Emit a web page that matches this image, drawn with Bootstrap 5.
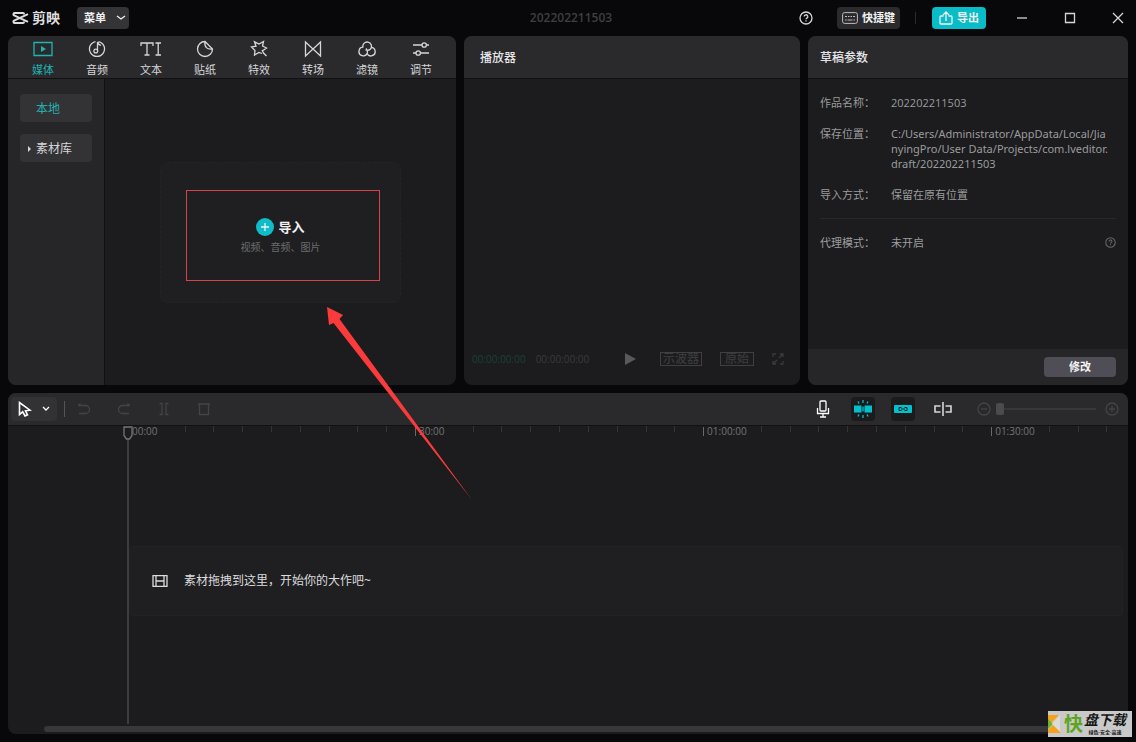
<!DOCTYPE html>
<html lang="zh-CN" data-bs-theme="dark">
<head>
<meta charset="utf-8">
<meta name="viewport" content="width=device-width, initial-scale=1">
<title>剪映</title>
<link href="https://cdn.jsdelivr.net/npm/bootstrap@5.3.0/dist/css/bootstrap.min.css" rel="stylesheet">
<style>
:root{--teal:#00c1cd;--head:#2a2a2d;--pane:#1c1c1e;--side:#262629;--chip:#343437;--line:#111113}
body{background:#08080a;color:#d6d6d8;font:12px/16px "Open Sans","Noto Sans CJK SC",sans-serif}
svg{fill:none;stroke:currentColor;stroke-width:1.3;display:block;flex:none}
button{font:inherit;color:inherit;border:0;background:none;padding:0}
.titlebar{display:grid;grid-template-columns:1fr auto 1fr;height:36px;padding:0 6px 0 12px}
.brand{font-size:14px;font-weight:700;gap:3px;color:#dededf}
.doc-title{color:#3f3f43;font-weight:600}
.chip-btn{background:var(--chip);border-radius:4px;height:22px;font-weight:700;font-size:11px;color:#f0f0f0}
.menu-btn{width:52px;margin-left:17px;gap:10px;padding-left:4px}
.keys-btn{width:63px;background:#2b2b2e;margin:0 15px 0 24px}
.export-btn{width:54px;background:#08bcc8;margin:0 24px 0 16px}
.vline{width:1px;height:12px;background:#2b2b2e}
.vline-tall{height:16px;background:#555558}
.win-btn{width:24px;height:24px}
.win-group{gap:24px}
.workspace{display:grid;grid-template-columns:28fr 21fr 20fr;gap:8px;flex:349 1 0;min-height:300px}
.pane{background:var(--pane);border-radius:8px;min-width:0}
.pane-head{background:var(--head);height:43px;border-bottom:1px solid var(--line);border-radius:8px 8px 0 0}
.pane-title{font-size:12px;line-height:16px;padding:2px 16px 0;margin:0;font-weight:500;color:#e6e6e8}
.pane-title-near{padding-left:12px}
.tool-tab{width:54px;font-size:11px;line-height:14px;gap:5px;padding-top:4px}
.tool-tab.on{color:#1fb3b3}
.side{width:97px;background:var(--side);border-right:1px solid var(--line);border-radius:0 0 0 8px;padding:15px 12px;gap:12px}
.side-btn{background:#333336;border-radius:4px;height:28px;text-align:left;padding:2px 0 0 8px;gap:5px}
.side-btn.on{color:#25aeb0;padding-left:16px}
.drop{width:241px;height:141px;background:#1f1f21;border:1px dashed #242427;border-radius:8px;gap:4px;padding-top:8px}
.import-btn{font-size:13px;font-weight:700;color:#f2f2f2;line-height:18px;gap:4px}
.drop-note{font-size:10px;line-height:14px;color:#6c6c6f}
.marker{left:25px;top:27px;width:194px;height:91px;border:1px solid #d8434b}
.pointer-arrow{left:164px;top:142px;z-index:5;pointer-events:none}
.player-bar{height:24px;padding:0 16px 0 8px;margin-bottom:14px;font-size:10px;color:#3a3a3d}
.time-now{color:#164238;margin-right:10px}
.box-btn{border:1px solid #3f3f41;line-height:12px;height:14px;color:#3f3f41;font-size:12px;padding:0 2px;margin-right:18px}
.box-btn-wide{padding:0 4px}
.facts{display:grid;grid-template-columns:71px 1fr;row-gap:16px;font-size:11px;line-height:15px;margin:0;padding:16px 12px;color:#9b9b9d}
.facts dt{font-weight:400}.facts dd{margin:0}
.facts .file-path{font-family:"Noto Sans","Noto Sans CJK SC",sans-serif;white-space:nowrap}
.facts hr{grid-column:1/-1;margin:0;border-color:#4a4a4d}
.hint{color:#6a6a6d}
.pane-foot{height:36px;background:var(--side);border-radius:0 0 8px 8px;padding:0 12px}
.edit-btn{width:72px;height:20px;border-radius:4px;background:#4f4e57;color:#f4f4f4;font-size:11px;font-weight:700}
.timeline{flex:341 1 0;min-height:260px;margin-top:8px}
.tl-tools{height:33px;background:var(--head);border-bottom:1px solid var(--line);border-radius:8px 8px 0 0;padding:0 4px 0 3px}
.tool{width:24px;height:24px;border-radius:4px;display:flex;align-items:center;justify-content:center}
.tool-slim{width:16px}
.dim{color:#444447}
.tool.on{background:#1b1b1e;color:var(--teal)}
.select-tool{width:46px;height:24px;background:#323235;border-radius:4px;color:#fff;gap:10px;margin-right:7px}
.edit-tools{gap:16px;margin-left:7px}
.view-tools{gap:16px}
.zoom-tools{gap:4px;padding-left:5px}
.zoom-range{appearance:none;-webkit-appearance:none;width:100px;height:16px;background:none;margin:0}
.zoom-range::-webkit-slider-runnable-track{height:2px;background:#38383b}
.zoom-range::-webkit-slider-thumb{-webkit-appearance:none;width:8px;height:12px;border-radius:2px;background:#4b4b4e;margin-top:-5px}
.ruler{margin-left:119px;height:10px;display:grid;grid-template-columns:8fr repeat(8,4fr) 8fr repeat(8,4fr) 8fr repeat(8,4fr) 8fr 4fr 4fr 3fr;font-size:10px;line-height:10px;color:#737376}
.ruler i{border-left:1px solid #343437;height:6px}
.ruler span{padding-left:4px;position:relative;white-space:nowrap}
.ruler span::before{content:"";position:absolute;left:0;top:1px;height:9px;border-left:1px solid #6a6a6d}
.ruler .at-start{padding-left:5px}
.ruler .at-start::before{display:none}
.playhead{left:114px;top:0;bottom:10px;width:12px;color:#757578}
.playhead::after{content:"";flex:1;width:2px;background:#3d3d40}
.track{margin:0 5px 0 121px;height:70px;background:#1f1f21;border:1px solid #222224;border-radius:4px;padding-left:22px;gap:16px;color:#dcdcde}
.scroller{margin:0 8px 2px 36px;height:6px;border-radius:3px;background:#38383a}
.stamp{right:4px;bottom:5px;width:84px;height:26px;background:#c9c9c9;color:#151515;z-index:6}
.stamp svg{stroke:none}
.stamp-lead{color:#5ea321;font-size:19px;line-height:24px;font-weight:700;margin:0 1px 0 3px}
.stamp-main{font-size:14px;line-height:16px;font-weight:700;font-style:italic}
.stamp-sub{font-size:5px;line-height:8px;font-weight:700}
</style>
</head>
<body class="d-flex flex-column min-vh-100 position-relative">
<header class="titlebar align-items-center">
  <div class="d-flex align-items-center">
    <div class="brand d-flex align-items-center">
      <svg width="17" height="14" viewBox="0 0 17 14"><g stroke-width="2"><path d="M1.500 4V3q0-1 1-1H11q1 0 1 1v.5M1.500 10v1q0 1 1 1H11q1 0 1-1v-.5"/><path d="M1 3.800 16 10.800M1 10.200 16 3.200"/></g></svg>
      <span>剪映</span>
    </div>
    <button class="chip-btn menu-btn d-flex align-items-center justify-content-center">菜单
      <svg width="10" height="6" viewBox="0 0 10 6"><path d="m1 1 4 3 4-3"/></svg></button>
  </div>
  <div class="doc-title">202202211503</div>
  <div class="d-flex align-items-center justify-content-end">
    <button aria-label="帮助"><svg width="14" height="14" viewBox="0 0 14 14"><circle cx="7" cy="7" r="6"/><path d="M5.200 5.600a1.800 1.800 0 1 1 2.700 1.500q-.9.5-.9 1.100M7 9.300v1.200"/></svg></button>
    <button class="chip-btn keys-btn d-flex align-items-center justify-content-center gap-1">
      <svg width="16" height="12" viewBox="0 0 16 12"><g stroke-width="1" stroke="#bdbdbf"><rect x=".6" y=".6" width="14.800" height="10.800" rx="2"/><path d="M3 4.500h2m1 0h1.500m1 0H10m1 0h2M3 8h1.500m1 0h5m1 0H13"/></g></svg>快捷键</button>
    <span class="vline"></span>
    <button class="chip-btn export-btn d-flex align-items-center justify-content-center gap-1">
      <svg width="14" height="14" viewBox="0 0 14 14"><path d="M4.500 5H2q-1 0-1 1v6q0 1 1 1h10q1 0 1-1V6q0-1-1-1H9.500M7 10V1.500M4 4l3-3 3 3"/></svg>导出</button>
    <div class="win-group d-flex">
      <button class="win-btn d-flex align-items-center justify-content-center" aria-label="最小化"><svg width="12" height="12" viewBox="0 0 12 12"><path d="M1 6h10"/></svg></button>
      <button class="win-btn d-flex align-items-center justify-content-center" aria-label="最大化"><svg width="12" height="12" viewBox="0 0 12 12"><path d="M1.500 1.500h9v9h-9z"/></svg></button>
      <button class="win-btn d-flex align-items-center justify-content-center" aria-label="关闭"><svg width="12" height="12" viewBox="0 0 12 12"><path d="m1 1 10 10M11 1 1 11"/></svg></button>
    </div>
  </div>
</header>

<div class="d-flex flex-column flex-fill px-2 pb-2">
<main class="workspace">
  <section class="pane d-flex flex-column">
    <nav class="pane-head d-flex px-2">
      <button class="tool-tab on d-flex flex-column align-items-center"><svg width="20" height="18" viewBox="0 0 20 18"><path d="M1 2.500h18v13H1z"/><path d="m8 6 5 3-5 3z" fill="currentColor" stroke="none"/></svg>媒体</button>
      <button class="tool-tab d-flex flex-column align-items-center"><svg width="18" height="18" viewBox="0 0 18 18"><path d="M7.500 1.600a7.500 7.500 0 1 0 3 0M9.500 11V2q.5 2.500 3.500 3.500"/><circle cx="7.800" cy="11" r="1.900"/></svg>音频</button>
      <button class="tool-tab d-flex flex-column align-items-center"><svg width="22" height="18" viewBox="0 0 22 18"><path d="M1 6V3h12v3M7 3v12M4.500 15h5M15.500 3H21M18.200 3v12M15.500 15H21"/></svg>文本</button>
      <button class="tool-tab d-flex flex-column align-items-center"><svg width="18" height="18" viewBox="0 0 18 18"><path d="M9 1.500a7.500 7.500 0 1 0 7.500 7.500ZM9 1.500q-1 8.500 7.500 7.500"/></svg>贴纸</button>
      <button class="tool-tab d-flex flex-column align-items-center"><svg width="18" height="18" viewBox="0 0 18 18"><path d="M12 13.500 9 12.500 4.500 15 5 10.500 1.500 7 6 6.200 4.500 1.800 9 4 13.500 1.500 12.500 6 16.500 8 13 10.500M12 10l1.500 3 3 3"/></svg>特效</button>
      <button class="tool-tab d-flex flex-column align-items-center"><svg width="18" height="18" viewBox="0 0 18 18"><path d="M1.500 2v14L9 9zM16.500 2v14L9 9z"/></svg>转场</button>
      <button class="tool-tab d-flex flex-column align-items-center"><svg width="18" height="18" viewBox="0 0 18 18"><path d="M5 7.500a4.300 4.300 0 1 1 7.500 1.500Q10.500 11 7.500 10M5.500 7.200a4.300 4.300 0 1 0 3.800 5.800Q9.800 10.500 8 8.500M12.800 7.300a4.300 4.300 0 1 1-3.800 6.200"/></svg>滤镜</button>
      <button class="tool-tab d-flex flex-column align-items-center"><svg width="18" height="18" viewBox="0 0 18 18"><path d="M1 5h9m4.500 0H17M1 13h3m4.500 0H17"/><circle cx="12.200" cy="5" r="2.200"/><circle cx="6.200" cy="13" r="2.200"/></svg>调节</button>
    </nav>
    <div class="d-flex flex-fill">
      <aside class="side d-flex flex-column">
        <button class="side-btn on">本地</button>
        <button class="side-btn d-flex align-items-center"><svg width="3" height="6" viewBox="0 0 3 6"><path d="m0 0 3 3-3 3z" fill="currentColor" stroke="none"/></svg>素材库</button>
      </aside>
      <div class="flex-fill d-flex align-items-center justify-content-center">
        <div class="drop position-relative d-flex flex-column align-items-center justify-content-center">
          <button class="import-btn d-flex align-items-center"><svg width="18" height="18" viewBox="0 0 18 18"><circle cx="9" cy="9" r="9" fill="#10bcc8" stroke="none"/><path d="M9 5v8M5 9h8"/></svg>导入</button>
          <div class="drop-note">视频、音频、图片</div>
          <div class="marker position-absolute"></div>
          <svg class="pointer-arrow position-absolute" width="148" height="196" viewBox="0 0 148 196"><path d="M2 2 18 10 14.500 14 147 195 8.500 18 4 20Z" fill="#fb3b3b" stroke="none"/></svg>
        </div>
      </div>
    </div>
  </section>

  <section class="pane d-flex flex-column">
    <div class="pane-head d-flex align-items-center"><h2 class="pane-title">播放器</h2></div>
    <div class="flex-fill"></div>
    <div class="player-bar d-flex align-items-center">
      <span class="time-now">00:00:00:00</span><span>00:00:00:00</span>
      <div class="ms-auto d-flex align-items-center">
        <button aria-label="播放" class="me-4"><svg width="11" height="12" viewBox="0 0 11 12"><path d="M0 0 11 6 0 12z" fill="#59595b" stroke="none"/></svg></button>
        <button class="box-btn">示波器</button>
        <button class="box-btn box-btn-wide">原始</button>
        <button aria-label="全屏"><svg width="12" height="12" viewBox="0 0 12 12"><path d="M1 4V1h3M8 1h3v3M11 8v3H8M4 11H1V8M7 5l3.500-3.500M5 7l-3.500 3.500"/></svg></button>
      </div>
    </div>
  </section>

  <section class="pane d-flex flex-column">
    <div class="pane-head d-flex align-items-center"><h2 class="pane-title pane-title-near">草稿参数</h2></div>
    <dl class="facts">
      <dt>作品名称：</dt><dd>202202211503</dd>
      <dt>保存位置：</dt><dd class="file-path">C:/Users/Administrator/AppData/Local/Jia<br>nyingPro/User Data/Projects/com.lveditor.<br>draft/202202211503</dd>
      <dt>导入方式：</dt><dd>保留在原有位置</dd>
      <hr>
      <dt>代理模式：</dt><dd class="d-flex justify-content-between align-items-center">未开启<svg class="hint" width="11" height="11" viewBox="0 0 14 14"><circle cx="7" cy="7" r="6"/><path d="M5.200 5.600a1.800 1.800 0 1 1 2.700 1.500q-.9.5-.9 1.100M7 9.300v1.200"/></svg></dd>
    </dl>
    <div class="pane-foot d-flex align-items-center justify-content-end mt-auto"><button class="edit-btn">修改</button></div>
  </section>
</main>

<section class="pane timeline d-flex flex-column">
  <div class="tl-tools d-flex align-items-center">
    <button class="select-tool d-flex align-items-center justify-content-center" aria-label="选择">
      <svg width="14" height="16" viewBox="0 0 14 16"><path d="M1.500 1.500v12l3.200-2.700L7 15l2.500-1.200-2-4 4.500-.6z" stroke-width="1.600"/></svg>
      <svg width="8" height="6" viewBox="0 0 8 6"><path d="m1 1 3 3 3-3"/></svg></button>
    <span class="vline vline-tall"></span>
    <div class="edit-tools d-flex">
      <button class="tool dim" aria-label="撤销"><svg width="14" height="14" viewBox="0 0 14 14"><path d="M1 3.500h7.500a4 4 0 0 1 0 8H2M3.500 1.500 1.500 3.500"/></svg></button>
      <button class="tool dim" aria-label="恢复"><svg width="14" height="14" viewBox="0 0 14 14"><path d="M13 3.500H5.500a4 4 0 0 0 0 8H12M10.500 1.500 12.500 3.500"/></svg></button>
      <button class="tool dim" aria-label="分割"><svg width="14" height="14" viewBox="0 0 14 14"><path d="M2.500 1.500h2.500v11H2.500M11.500 1.500H9v11h2.500"/></svg></button>
      <button class="tool dim" aria-label="删除"><svg width="14" height="14" viewBox="0 0 14 14"><path d="M1 2h12M2.500 2v10.500h9V2"/></svg></button>
    </div>
    <div class="view-tools d-flex align-items-center ms-auto">
      <button class="tool text-white" aria-label="录音"><svg width="14" height="18" viewBox="0 0 14 18"><rect x="4" y="1" width="6" height="10" rx="1"/><path d="M1.500 8v5.500h11V8M7 13.500V17M4 17h6"/></svg></button>
      <button class="tool on" aria-label="主轨磁吸"><svg width="18" height="18" viewBox="0 0 18 18"><path d="M0 5.500h7.500v7H0zM10.500 5.500H18v7h-7.500zM8.300 6.500h1.400v5H8.300z" fill="currentColor" stroke="none"/><path d="M9 0v3M9 15v3M4 1.500 5 3.500M14 1.500l-1 2M4 16.500l1-2M14 16.500l-1-2"/></svg></button>
      <button class="tool on" aria-label="联动"><svg width="18" height="10" viewBox="0 0 18 10"><rect y="1" width="18" height="8" rx="1" fill="currentColor" stroke="none"/><path d="M7.500 3.500H5v3h2.500M10.500 3.500H13v3h-2.500M7 5h4" stroke="#1b1b1e" stroke-width="1"/></svg></button>
      <button class="tool" aria-label="预览轴"><svg width="18" height="14" viewBox="0 0 18 14"><path d="M6.500 4H1v6h5.500M11.500 4H17v6h-5.500M9 0v14" stroke-width="1.600"/></svg></button>
      <div class="zoom-tools d-flex align-items-center">
        <button class="tool tool-slim dim" aria-label="缩小"><svg width="14" height="14" viewBox="0 0 14 14"><circle cx="7" cy="7" r="6"/><path d="M4 7h6"/></svg></button>
        <input type="range" class="zoom-range" min="0" max="100" value="0" aria-label="时间线缩放">
        <button class="tool dim" aria-label="放大"><svg width="14" height="14" viewBox="0 0 14 14"><circle cx="7" cy="7" r="6"/><path d="M4 7h6M7 4v6"/></svg></button>
      </div>
    </div>
  </div>
  <div class="position-relative flex-fill d-flex flex-column">
    <div class="ruler">
      <span class="at-start">00:00</span><i></i><i></i><i></i><i></i><i></i><i></i><i></i><i></i>
      <span>30:00</span><i></i><i></i><i></i><i></i><i></i><i></i><i></i><i></i>
      <span>01:00:00</span><i></i><i></i><i></i><i></i><i></i><i></i><i></i><i></i>
      <span>01:30:00</span><i></i><i></i><i></i>
    </div>
    <div class="flex-fill d-flex flex-column justify-content-center">
      <div class="track d-flex align-items-center"><svg width="16" height="12" viewBox="0 0 16 12"><path d="M1 .7h14v10.600H1zM4 1v10M12 1v10M4 6h8"/></svg><span>素材拖拽到这里，开始你的大作吧~</span></div>
    </div>
    <div class="playhead position-absolute d-flex flex-column align-items-center"><svg width="10" height="14" viewBox="0 0 10 14"><path d="M1 1h8v8.500L6.500 13h-3L1 9.500z"/></svg></div>
    <div class="scroller"></div>
  </div>
</section>
</div>

<div class="stamp position-absolute d-flex align-items-center">
  <svg width="13" height="22" viewBox="0 0 13 22"><path d="M0 2h11L3 10 0 7z" fill="#f5a21b"/><path d="M0 6 5 11 0 16z" fill="#6bb52b"/><path d="M12 2v17L4 11z" fill="#dcdcd4"/><path d="m5 12 8 8H0v-3z" fill="#f5a21b"/></svg>
  <span class="stamp-lead">快</span>
  <div class="d-flex flex-column align-items-center"><span class="stamp-main">盘下载</span><span class="stamp-sub">绿色·安全·高速</span></div>
</div>
<script src="https://cdn.jsdelivr.net/npm/bootstrap@5.3.0/dist/js/bootstrap.bundle.min.js"></script>
</body>
</html>
